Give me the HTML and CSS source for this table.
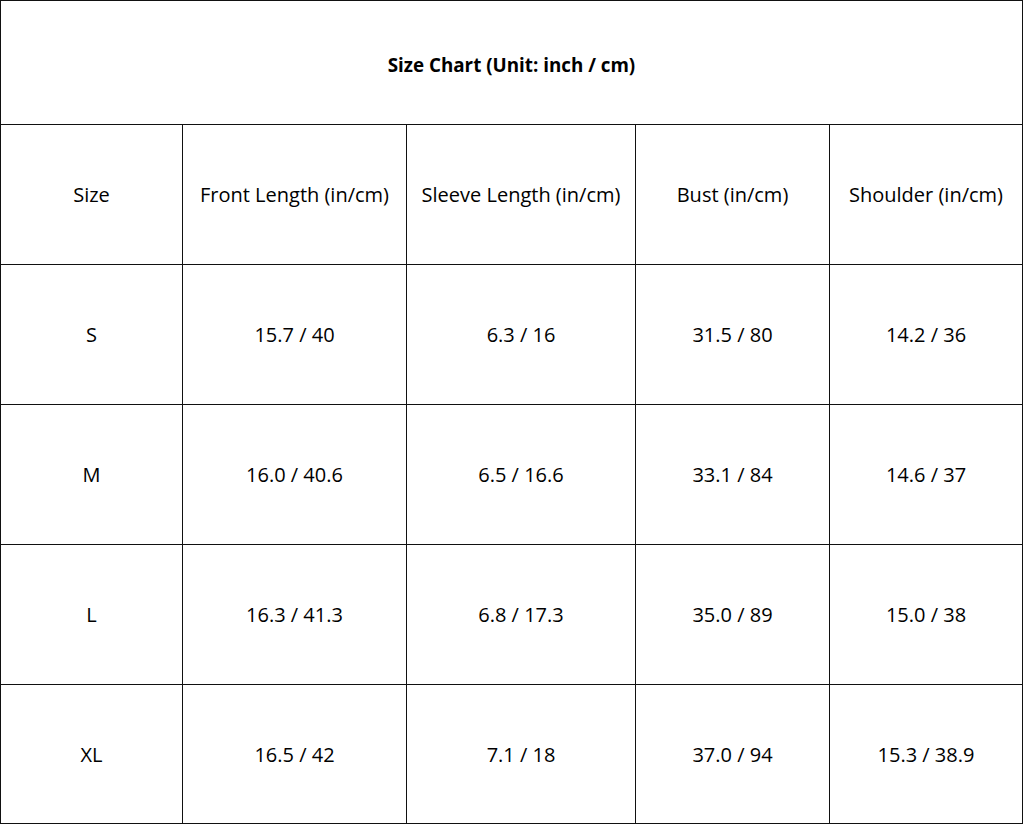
FILE: index.html
```html
<!DOCTYPE html>
<html>
<head>
<meta charset="utf-8">
<link rel="stylesheet" href="styles.css">
</head>
<body>
<div class="chart">
  <div class="cell title">Size Chart (Unit: inch / cm)</div>
  <div class="cell">Size</div>
  <div class="cell">Front Length (in/cm)</div>
  <div class="cell">Sleeve Length (in/cm)</div>
  <div class="cell">Bust (in/cm)</div>
  <div class="cell">Shoulder (in/cm)</div>

  <div class="cell">S</div>
  <div class="cell">15.7 / 40</div>
  <div class="cell">6.3 / 16</div>
  <div class="cell">31.5 / 80</div>
  <div class="cell">14.2 / 36</div>

  <div class="cell">M</div>
  <div class="cell">16.0 / 40.6</div>
  <div class="cell">6.5 / 16.6</div>
  <div class="cell">33.1 / 84</div>
  <div class="cell">14.6 / 37</div>

  <div class="cell">L</div>
  <div class="cell">16.3 / 41.3</div>
  <div class="cell">6.8 / 17.3</div>
  <div class="cell">35.0 / 89</div>
  <div class="cell">15.0 / 38</div>

  <div class="cell">XL</div>
  <div class="cell">16.5 / 42</div>
  <div class="cell">7.1 / 18</div>
  <div class="cell">37.0 / 94</div>
  <div class="cell">15.3 / 38.9</div>
</div>
</body>
</html>
```
FILE: styles.css
```css
html, body {
  margin: 0;
  padding: 0;
  background: #fff;
}
.chart {
  display: grid;
  grid-template-columns: 181px 223px 228px 193px 192px;
  grid-template-rows: 123px 139px 139px 139px 139px 138px;
  gap: 1px;
  padding: 1px;
  width: max-content;
  background: #111;
  font-family: "Open Sans", "Liberation Sans", sans-serif;
  font-size: 20px;
  color: #000;
}
.cell {
  background: #fff;
  display: flex;
  align-items: center;
  justify-content: center;
  white-space: nowrap;
}
.title {
  grid-column: 1 / -1;
  font-weight: bold;
  font-size: 18.8px;
  padding-top: 4px;
}
```
